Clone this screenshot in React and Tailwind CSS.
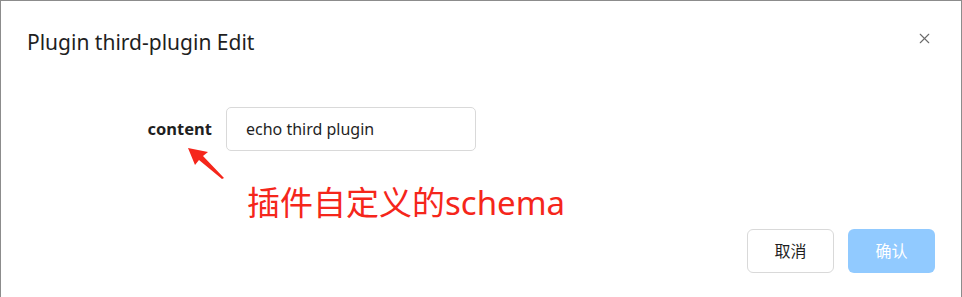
import { X } from "lucide-react";

function App() {
  return (
    <div
      className="w-[962px] h-[297px] bg-white border-t border-l border-r border-[#8c8c8c] relative overflow-hidden"
      style={{ fontFamily: '"Noto Sans", "Noto Sans CJK SC", sans-serif' }}
    >
      {/* header */}
      <div className="flex items-center justify-between pl-[26px] pr-[28px] pt-[27px]">
        <h2 className="text-[21px] leading-[28px] text-[#1f1f1f]">Plugin third-plugin Edit</h2>
        <X size={17} strokeWidth={1.5} className="text-[#6b6b6b] -mt-[8px]" />
      </div>

      {/* form */}
      <div className="flex items-center mt-[51px]">
        <label className="w-[211px] text-right text-[16.5px] font-bold text-[#1f1f1f]">content</label>
        <div className="ml-[14px] w-[250px] h-[44px] border border-[#d9d9d9] rounded-[5px] flex items-center px-[19px] text-[16px] text-[#1f1f1f]">
          echo third plugin
        </div>
      </div>

      {/* annotation */}
      <svg className="absolute left-[184px] top-[143px]" width="44" height="38" viewBox="0 0 44 38">
        <path d="M3 4 L23 8 L18 12 L39 34 L37 35 L14 16 L10 21 Z" fill="#f5261b" />
      </svg>
      <div className="pl-[246px] mt-[30px] text-[33px] leading-[44px] text-[#f5261b]">插件自定义的schema</div>

      {/* footer */}
      <div className="flex justify-end gap-[14px] pr-[26px] mt-[4px]">
        <button className="w-[87px] h-[44px] border border-[#d9d9d9] rounded-[6px] bg-white text-[16px] text-[#1f1f1f]">
          取消
        </button>
        <button className="w-[87px] h-[44px] rounded-[6px] bg-[#91caff] text-[16px] text-white">确认</button>
      </div>
    </div>
  );
}

export default App;
